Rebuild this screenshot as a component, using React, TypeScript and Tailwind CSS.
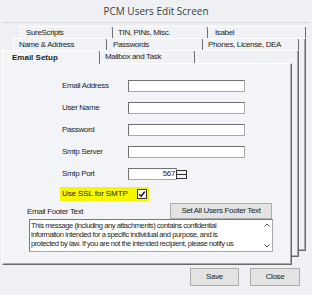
import React from "react";

const ui = { fontFamily: '"Liberation Sans", Arial, sans-serif' };

function Input({ w }: { w: string }) {
  return (
    <div
      className={`${w} h-[12px] bg-white border border-[#a9a9a9] border-t-[#707070] border-l-[#707070]`}
    />
  );
}

export default function App() {
  return (
    <div
      className="w-[312px] h-[295px] bg-[#eef0f3] overflow-hidden flex flex-col text-[#1e1e1e]"
      style={ui}
    >
      <div
        className="h-[22px] flex items-center justify-center text-[10px] text-[#3c3c3c]"
        style={{ fontFamily: '"Open Sans", "Noto Sans", sans-serif' }}
      >
        PCM Users Edit Screen
      </div>

      <div className="relative h-[242px] mx-[2px] border-t border-[#d6d8dc]">
        {/* back card 1 */}
        <div className="absolute left-[18px] top-[3px] w-[286px] h-[225px] flex flex-col">
          <div className="flex h-[12px] text-[8px] tracking-[-0.35px]">
            <div className="w-[93px] flex items-center pl-[5px] bg-[#f1f2f5] border-t border-l border-r border-t-white border-l-white border-r-[#707070] rounded-tr-[3px]">
              SureScripts
            </div>
            <div className="w-[95px] flex items-center pl-[5px] bg-[#f1f2f5] border-t border-r border-t-white border-r-[#707070] rounded-tr-[3px]">
              TIN, PINs, Misc.
            </div>
            <div className="flex-1 flex items-center pl-[7px] bg-[#f1f2f5] border-t border-r border-t-white border-r-[#6a6a6a] rounded-tr-[3px]">
              Isabel
            </div>
          </div>
          <div className="flex-1 bg-[#f1f2f5] border border-white border-r-[#6a6a6a] border-b-[#6a6a6a] shadow-[inset_-1px_-1px_0_#a8a8a8]" />
        </div>

        {/* back card 2 */}
        <div className="absolute left-[11px] top-[15px] w-[286px] h-[219px] flex flex-col">
          <div className="flex h-[12px] text-[8px] tracking-[-0.35px]">
            <div className="w-[94px] flex items-center pl-[5px] bg-[#f1f2f5] border-t border-l border-r border-t-white border-l-white border-r-[#707070] rounded-tr-[3px]">
              Name &amp; Address
            </div>
            <div className="w-[96px] flex items-center pl-[6px] bg-[#f1f2f5] border-t border-r border-t-white border-r-[#707070] rounded-tr-[3px]">
              Passwords
            </div>
            <div className="flex-1 flex items-center pl-[5px] bg-[#f1f2f5] border-t border-r border-t-white border-r-[#6a6a6a] rounded-tr-[3px]">
              Phones, License, DEA
            </div>
          </div>
          <div className="flex-1 bg-[#f1f2f5] border border-white border-r-[#6a6a6a] border-b-[#6a6a6a] shadow-[inset_-1px_-1px_0_#a8a8a8]" />
        </div>

        {/* front card */}
        <div className="absolute left-[0px] top-[27px] w-[290px] h-[215px] flex flex-col">
          <div className="flex h-[13px] text-[8px]">
            <div className="w-[98px] flex items-center pl-[9px] bg-[#f3f4f7] font-bold border-t border-l border-r border-t-white border-l-white border-r-[#707070] rounded-tr-[3px] -mb-px relative z-10">
              Email Setup
            </div>
            <div className="w-[95px] flex items-center pl-[5px] bg-[#f1f2f5] border-t border-r border-t-white border-r-[#707070] rounded-tr-[3px] tracking-[-0.35px]">
              Mailbox and Task
            </div>
          </div>
          <div className="flex-1 bg-[#f3f4f7] border border-white border-r-[#6a6a6a] border-b-[#6a6a6a] shadow-[inset_-1px_-1px_0_#a8a8a8] flex flex-col text-[8px] tracking-[-0.35px]">
            <div className="pl-[59px] pt-[11px] flex flex-col">
              {["Email Address", "User Name", "Password", "Smtp Server"].map((l) => (
                <div key={l} className="h-[22px] flex items-center">
                  <div className="w-[66px]">{l}</div>
                  <Input w="w-[117px]" />
                </div>
              ))}
              <div className="h-[22px] flex items-center">
                <div className="w-[66px]">Smtp Port</div>
                <div className="w-[49px] h-[12px] bg-white border border-[#a9a9a9] border-t-[#707070] border-l-[#707070] flex items-center justify-end pr-[1px]">
                  567
                </div>
                <svg width="11" height="9" viewBox="0 0 11 9" className="-ml-[1px]">
                  <rect x="0.5" y="0.5" width="10" height="8" fill="#f4f4f4" stroke="#303030" />
                  <line x1="0" y1="4.5" x2="11" y2="4.5" stroke="#303030" />
                </svg>
              </div>
              <div className="h-[18px] flex items-center">
                <div className="-ml-[2px] h-[14px] bg-[#f6f600] flex items-center pl-[2px] pr-[2px]">
                  <span className="w-[68px] tracking-[-0.1px]">Use SSL for SMTP</span>
                  <div className="ml-[7px] w-[10px] h-[10px] bg-white border border-[#333] flex items-center justify-center">
                    <svg width="8" height="8" viewBox="0 0 8 8">
                      <path d="M1.2 4.2 L3.2 6.2 L6.8 1.6" fill="none" stroke="#111" strokeWidth="1.5" />
                    </svg>
                  </div>
                </div>
              </div>
            </div>
            <div className="pl-[24px] w-[270px] flex flex-col">
              <div className="h-[16px] flex items-center">
                <span className="mt-[2px]">Email Footer Text</span>
                <div className="ml-auto mr-[1px] w-[102px] h-[16px] bg-[#e3e3e3] border border-[#adadad] flex items-center justify-center">
                  Set All Users Footer Text
                </div>
              </div>
              <div className="ml-[2px] w-[244px] h-[33px] bg-white border border-[#a9a9a9] border-t-[#7a7a7a] border-l-[#7a7a7a] flex">
                <div className="flex-1 pl-[1px] pt-[1px] leading-[9px] overflow-hidden whitespace-nowrap text-[7.6px] tracking-[-0.45px]">
                  <div>This message (including any attachments) contains confidential</div>
                  <div>information intended for a specific individual and purpose, and is</div>
                  <div>protected by law. If you are not the intended recipient, please notify us</div>
                </div>
                <div className="w-[10px] flex flex-col justify-between items-center py-[3px]">
                  <svg width="6" height="4" viewBox="0 0 6 4">
                    <path d="M0.5 3.5 L3 1 L5.5 3.5" fill="none" stroke="#555" strokeWidth="1" />
                  </svg>
                  <svg width="6" height="4" viewBox="0 0 6 4">
                    <path d="M0.5 0.5 L3 3 L5.5 0.5" fill="none" stroke="#555" strokeWidth="1" />
                  </svg>
                </div>
              </div>
            </div>
          </div>
        </div>
      </div>

      <div className="flex justify-end gap-[11px] pr-[12px] pt-[4px] text-[8px] tracking-[-0.35px]">
        <div className="w-[49px] h-[18px] bg-[#e3e3e3] border border-[#adadad] flex items-center justify-center">
          Save
        </div>
        <div className="w-[50px] h-[18px] bg-[#e3e3e3] border border-[#adadad] flex items-center justify-center">
          Close
        </div>
      </div>
    </div>
  );
}
